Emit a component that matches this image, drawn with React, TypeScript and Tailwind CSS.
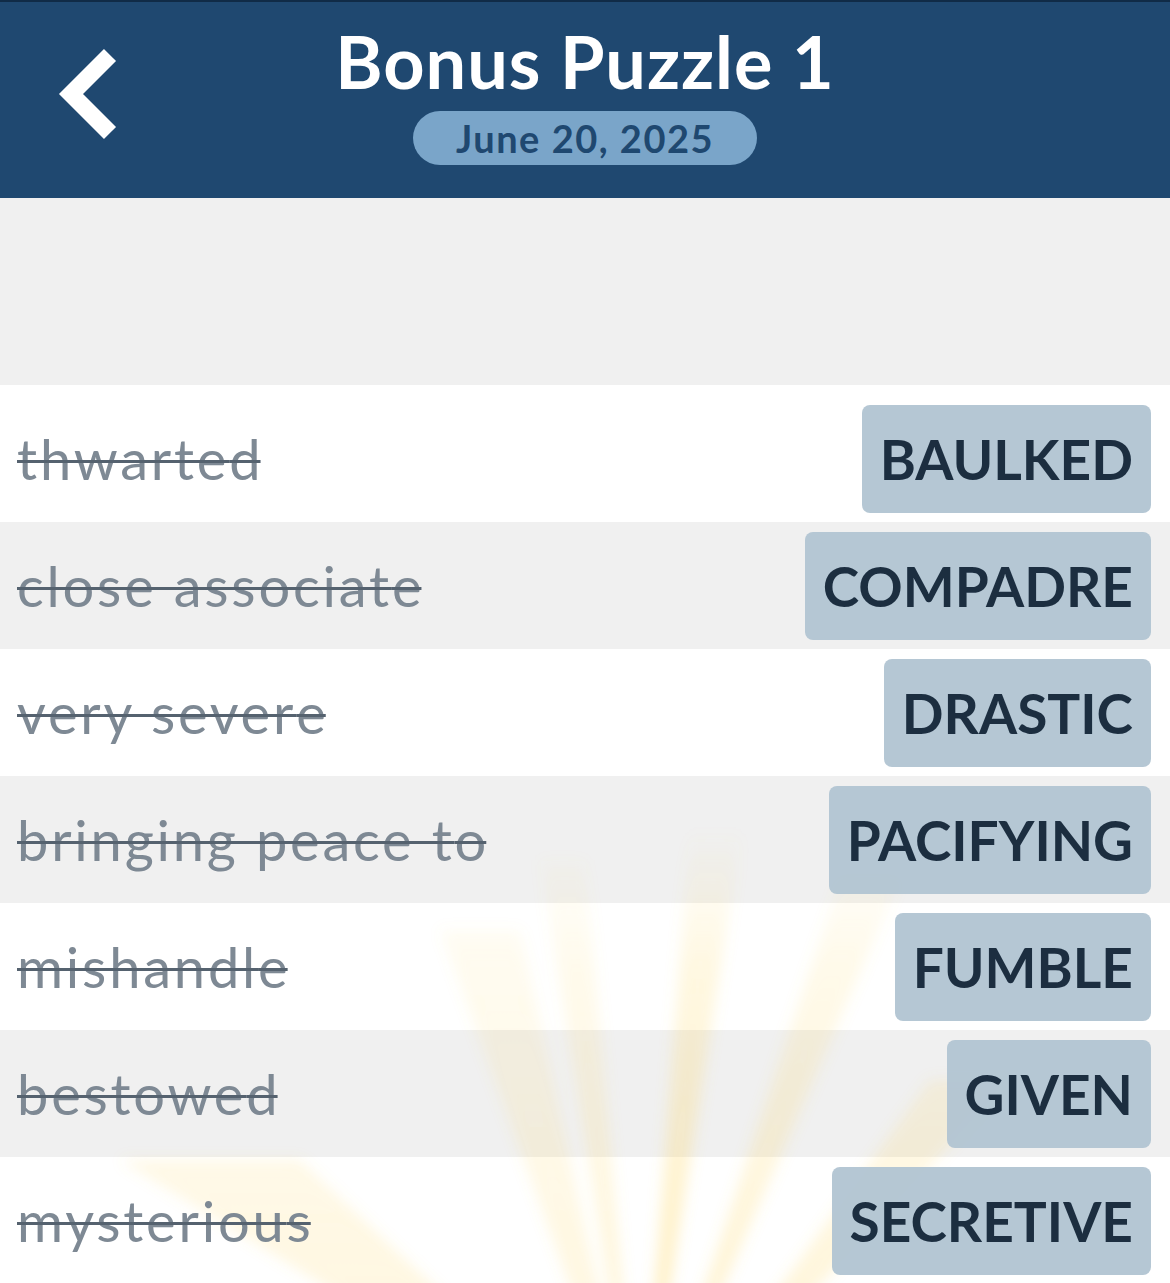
import React from "react";

const rows = [
  { clue: "thwarted", answer: "BAULKED" },
  { clue: "close associate", answer: "COMPADRE" },
  { clue: "very severe", answer: "DRASTIC" },
  { clue: "bringing peace to", answer: "PACIFYING" },
  { clue: "mishandle", answer: "FUMBLE" },
  { clue: "bestowed", answer: "GIVEN" },
  { clue: "mysterious", answer: "SECRETIVE" },
];

const ox = 640;
const oy = 1480;
const rays: [number, number, number, number][] = [
  [690, 742, 830, 0.55],
  [540, 585, 860, 0.35],
  [440, 520, 930, 0.3],
  [840, 900, 880, 0.4],
  [930, 1010, 1080, 0.35],
  [120, 300, 1160, 0.3],
];

function Rays() {
  return (
    <svg
      className="pointer-events-none absolute left-0 top-0 z-10"
      width={1170}
      height={1283}
      viewBox="0 0 1170 1283"
    >
      <defs>
        <linearGradient id="rg" x1="0" y1="830" x2="0" y2="1283" gradientUnits="userSpaceOnUse">
          <stop offset="0" stopColor="#ffd866" stopOpacity="0" />
          <stop offset="0.3" stopColor="#ffd866" stopOpacity="0.35" />
          <stop offset="1" stopColor="#ffd35a" stopOpacity="0.6" />
        </linearGradient>
        <filter id="blur" x="-20%" y="-20%" width="140%" height="140%">
          <feGaussianBlur stdDeviation="7" />
        </filter>
      </defs>
      <g filter="url(#blur)">
        {rays.map(([a, b, y, o], i) => (
          <polygon
            key={i}
            points={`${ox},${oy} ${a},${y} ${b},${y}`}
            fill="url(#rg)"
            opacity={o}
          />
        ))}
      </g>
    </svg>
  );
}

export default function App() {
  return (
    <div
      className="relative w-[1170px] h-[1283px] overflow-hidden bg-[#f0f0f0]"
      style={{ fontFamily: "Lato, 'Open Sans', sans-serif" }}
    >
      <header className="relative h-[198px] bg-[#1f4870] border-t-[2px] border-[#102b47] flex flex-col items-center">
        <svg
          className="absolute left-[52px] top-[46px]"
          width="70"
          height="96"
          viewBox="0 0 70 96"
        >
          <polyline
            points="58,7 19,46 58,85"
            fill="none"
            stroke="#ffffff"
            strokeWidth="17"
            strokeLinejoin="miter"
            strokeLinecap="butt"
          />
        </svg>
        <h1 className="mt-[19px] text-[72px] leading-[80px] font-bold text-white tracking-[1px]">
          Bonus Puzzle 1
        </h1>
        <div className="mt-[10px] h-[54px] w-[344px] rounded-full bg-[#7aa5c9] flex items-center justify-center">
          <span className="text-[38px] font-bold text-[#1f4870] leading-none tracking-[1.5px]">June 20, 2025</span>
        </div>
      </header>

      <div className="h-[187px]" />

      <div className="bg-white pt-[10px]">
        {rows.map((r, i) => (
          <div
            key={r.clue}
            className={`flex items-center justify-between pl-[17px] pr-[19px] pt-[10px] pb-[9px] ${
              i % 2 === 1 ? "bg-[#f0f0f0]" : "bg-white"
            }`}
          >
            <span className="relative z-20 text-[56px] leading-none text-[#7e8994] line-through decoration-[#55626f] decoration-[3px] tracking-[2.8px]">
              {r.clue.slice(0, -1)}
              <span className="tracking-normal">{r.clue.slice(-1)}</span>
            </span>
            <div className="relative z-20 h-[108px] rounded-[8px] bg-[#b1c4d2]/95 px-[18px] flex items-center">
              <span className="text-[55px] font-bold text-[#1c2e40] leading-none">
                {r.answer}
              </span>
            </div>
          </div>
        ))}
      </div>

      <Rays />
    </div>
  );
}
